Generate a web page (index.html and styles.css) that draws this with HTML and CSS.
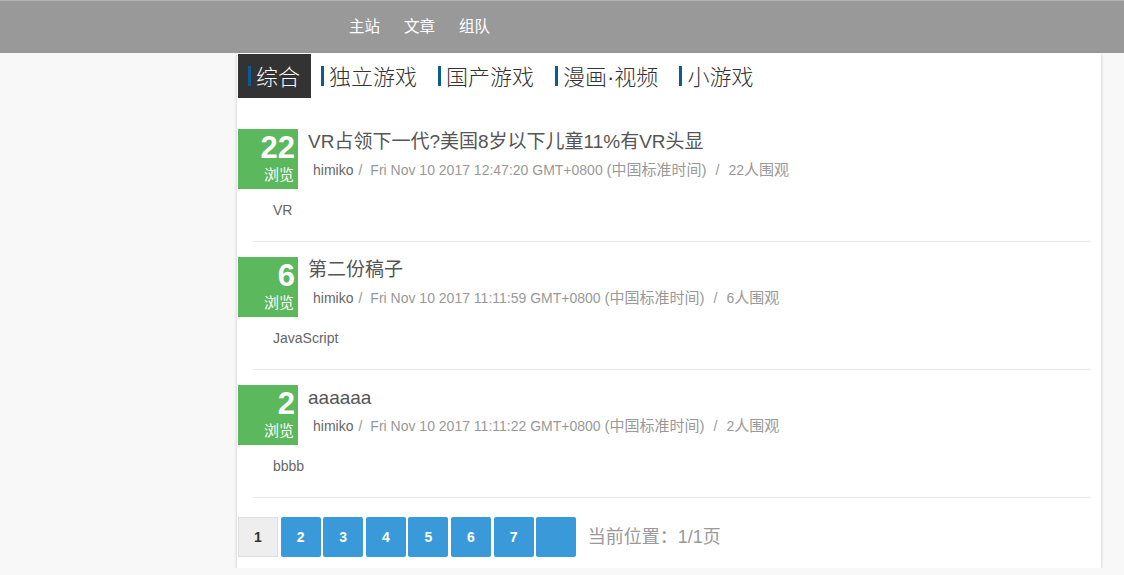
FILE: index.html
```html
<!DOCTYPE html>
<html lang="zh">
<head>
<meta charset="utf-8">
<title>文章</title>
<link rel="stylesheet" href="styles.css">
</head>
<body>
<header class="topbar">
  <nav class="topnav">
    <a href="#">主站</a>
    <a href="#">文章</a>
    <a href="#">组队</a>
  </nav>
</header>
<main class="card">
  <ul class="tabs">
    <li class="tab active"><span class="bar"></span>综合</li>
    <li class="tab"><span class="bar"></span>独立游戏</li>
    <li class="tab"><span class="bar"></span>国产游戏</li>
    <li class="tab"><span class="bar"></span>漫画·视频</li>
    <li class="tab"><span class="bar"></span>小游戏</li>
  </ul>
  <div class="list">
    <article class="item">
      <div class="row">
        <div class="views"><span class="num">22</span><span class="lbl">浏览</span></div>
        <div class="body">
          <h2 class="title">VR占领下一代?美国8岁以下儿童11%有VR头显</h2>
          <div class="meta"><span class="author">himiko</span><span class="sep1">/</span><span>Fri Nov 10 2017 12:47:20 GMT+0800 <span class="cn">(中国标准时间)</span></span><span class="sep2">/</span><span>22<span class="cn">人围观</span></span></div>
        </div>
      </div>
      <div class="tag">VR</div>
    </article>
    <article class="item">
      <div class="row">
        <div class="views"><span class="num">6</span><span class="lbl">浏览</span></div>
        <div class="body">
          <h2 class="title">第二份稿子</h2>
          <div class="meta"><span class="author">himiko</span><span class="sep1">/</span><span>Fri Nov 10 2017 11:11:59 GMT+0800 <span class="cn">(中国标准时间)</span></span><span class="sep2">/</span><span>6<span class="cn">人围观</span></span></div>
        </div>
      </div>
      <div class="tag">JavaScript</div>
    </article>
    <article class="item">
      <div class="row">
        <div class="views"><span class="num">2</span><span class="lbl">浏览</span></div>
        <div class="body">
          <h2 class="title">aaaaaa</h2>
          <div class="meta"><span class="author">himiko</span><span class="sep1">/</span><span>Fri Nov 10 2017 11:11:22 GMT+0800 <span class="cn">(中国标准时间)</span></span><span class="sep2">/</span><span>2<span class="cn">人围观</span></span></div>
        </div>
      </div>
      <div class="tag">bbbb</div>
    </article>
  </div>
  <div class="pager">
    <a class="page current" href="#">1</a>
    <a class="page" href="#">2</a>
    <a class="page" href="#">3</a>
    <a class="page" href="#">4</a>
    <a class="page" href="#">5</a>
    <a class="page" href="#">6</a>
    <a class="page" href="#">7</a>
    <a class="page" href="#"></a>
    <span class="pos">当前位置：1/1页</span>
  </div>
</main>
</body>
</html>
```

FILE: styles.css
```css
* { box-sizing: border-box; }
html, body { margin: 0; padding: 0; }
body {
  background: #f8f8f8;
  font-family: "Liberation Sans", "Noto Sans CJK SC", sans-serif;
  color: #555;
}
a { text-decoration: none; }

.topbar {
  height: 53px;
  background: #999;
  border-top: 1px solid #b3b3b3;
  display: flex;
  align-items: center;
  padding-bottom: 4px;
}
.topnav {
  margin-left: 349px;
  display: flex;
  gap: 24px;
}
.topnav a {
  color: #fff;
  font-size: 15.5px;
  font-family: "Noto Sans CJK SC", sans-serif;
  line-height: 20px;
  height: 20px;
}

.card {
  width: 864px;
  margin-left: 237px;
  background: #fff;
  padding: 1px 1px 11px 1px;
  box-shadow: 0 1px 3px rgba(0,0,0,0.22);
}

.tabs {
  list-style: none;
  margin: 0;
  padding: 0;
  display: flex;
  height: 44px;
}
.tab {
  display: flex;
  align-items: center;
  padding: 0 11px 3px 10px;
  font-family: "Liberation Sans", "Noto Sans CJK SC", sans-serif;
  font-weight: 300;
  font-size: 22px;
  color: #333;
}
.tab .bar {
  width: 3px;
  height: 20px;
  background: #0b5c94;
  margin: 3px 5px 0 0;
}
.tab.active {
  background: #333;
  color: #fff;
}

.list { padding-top: 16px; }
.item {
  padding-top: 15px;
}
.item::after {
  content: "";
  display: block;
  height: 1px;
  background: #eaeaea;
  margin: 0 10px 0 15px;
}
.row {
  display: flex;
  height: 60px;
}
.views {
  width: 60px;
  height: 60px;
  background: #5cb85c;
  color: #fff;
  display: flex;
  flex-direction: column;
  align-items: flex-end;
  padding-right: 3px;
}
.views .num {
  font-size: 31px;
  font-weight: bold;
  line-height: 36px;
  height: 36px;
  margin-top: 1px;
}
.views .lbl {
  font-family: "Noto Sans CJK SC", sans-serif;
  font-size: 15px;
  line-height: 20px;
  height: 20px;
  margin-top: -2px;
  margin-right: 1px;
}
.body { margin-left: 10px; }
.title {
  margin: 0;
  font-weight: normal;
  font-size: 19px;
  line-height: 26px;
  height: 26px;
  color: #555;
}
.meta {
  margin-top: 5px;
  padding-left: 5px;
  font-size: 14px;
  line-height: 20px;
  height: 20px;
  color: #999;
  white-space: nowrap;
}
.meta .cn { font-size: 15px; }
.meta .author { color: #666; }
.meta .sep1 { margin: 0 8px 0 5px; }
.meta .sep2 { margin: 0 9px; }
.tag {
  margin-top: 11px;
  margin-bottom: 21px;
  padding-left: 35px;
  font-size: 14px;
  line-height: 20px;
  height: 20px;
  color: #666;
}

.pager {
  margin-top: 19px;
  display: flex;
  align-items: center;
  gap: 2.6px;
  height: 40px;
}
.page {
  width: 40px;
  height: 40px;
  display: flex;
  align-items: center;
  justify-content: center;
  background: #3a9ad9;
  color: #fff;
  font-weight: bold;
  font-size: 14px;
  border-radius: 2px;
}
.page.current {
  background: #eee;
  color: #333;
  border: 1px solid #e0e0e0;
  border-radius: 0;
}
.pos {
  margin-left: 9px;
  font-size: 18px;
  line-height: 24px;
  height: 24px;
  color: #999;
}
```
